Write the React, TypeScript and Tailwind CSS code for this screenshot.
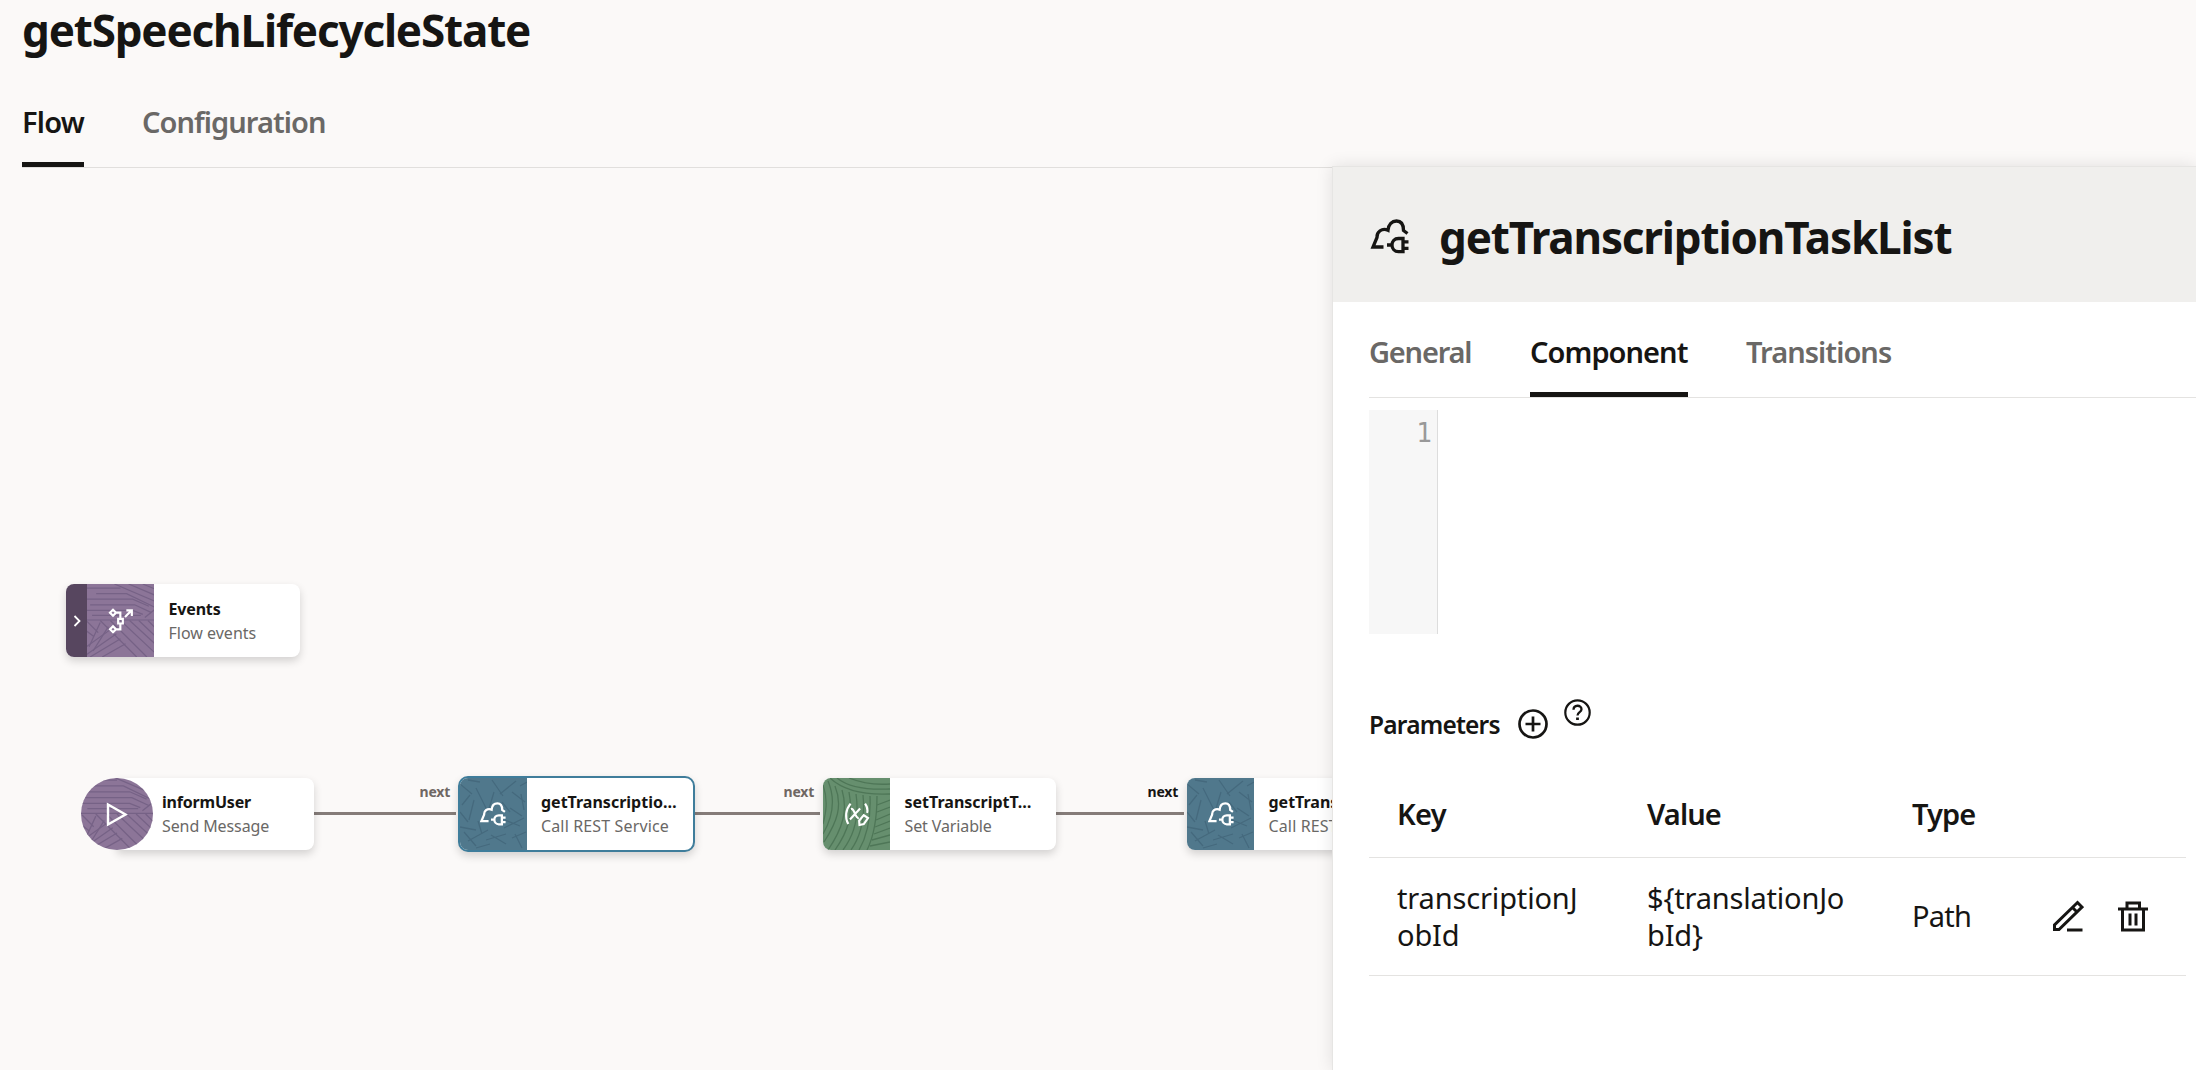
import type { ReactNode } from "react";

const FONT = "font-['Noto_Sans','Open_Sans',sans-serif]";

function CloudPlug({ className }: { className: string }) {
  return (
    <svg className={className} viewBox="11 6 38 36" fill="none" stroke="currentColor" strokeWidth="3.300">
      <path d="M23.500 34H13L17 24.500C16.500 19 22 14.500 28 17.200C28.500 11.500 32 8 36.500 8C41 8 43.500 11.500 43.500 17.500L47.500 20.500" strokeLinejoin="miter" />
      <path d="M43 25.500H38.500C34.500 25.500 32 28.500 32 32C32 35.500 34.500 38.700 38.500 38.700H43ZM27 32H32M43 28.800H48.500M43 35.400H48.500" />
    </svg>
  );
}

function FlowIcon() {
  return (
    <svg className="relative h-[28px] w-[26px]" viewBox="70 80 78 84" fill="none" stroke="white" strokeWidth="6.500">
      <path d="M85 88L94 97L85 106L76 97ZM85 138L94 147L85 156L76 147ZM100.500 115.500H114.500V129.500H100.500ZM94 97H107V115M107 130V147H94M121 110L141 90M125 90H141.500V107" />
    </svg>
  );
}

function VariableIcon() {
  return (
    <svg className="relative h-[27px] w-[27px]" viewBox="250 122 82 82" fill="none" stroke="white" strokeWidth="6.500">
      <path d="M273 130C258 148 255 172 266 192M317 130C324 140 326 148 323 158M274 146C286 142 286 176 298 174M302 145L271 178" />
      <path d="M299 182L313 165L326 174L313 192L300 195Z" />
    </svg>
  );
}

function PlayIcon() {
  return (
    <svg className="relative h-[25px] w-[22px]" viewBox="0 0 22 25" fill="none" stroke="white" strokeWidth="2.400">
      <path d="M2 2.500L19.500 12.500L2 22.500Z" />
    </svg>
  );
}

function PurplePattern() {
  return (
    <svg className="absolute inset-0 h-full w-full" viewBox="0 0 68 72" preserveAspectRatio="xMidYMid slice" fill="none" stroke="#6f5c80" strokeWidth="1.200" opacity="0.75">
      <path d="M0 4H34M10 9.500H40L68 23M0 15H46L62 22M4 20.500H48L64 28M0 26H46L56 30M6 31H54M0 35.500H68" />
      <path d="M28 0L68 17M42 0L68 11M56 0L68 5" />
      <path d="M68 25L58 33M1 37L12 48M0 46L8 52M3 62L14 38M7 66L22 42" />
      <path d="M14 36L50 72M24 36L60 72M34 36L68 68M43 36L68 59M52 36L68 51M61 36L68 43" />
      <path d="M4 72L34 54M0 70L30 49M16 72L39 59M0 62L24 45" />
    </svg>
  );
}

function BluePattern() {
  return (
    <svg className="absolute inset-0 h-full w-full" viewBox="0 0 67 72" preserveAspectRatio="none" fill="none" stroke="#426579" strokeWidth="1.3" opacity="0.75">
      <path d="M0 6L12 16M16 10L28 34M34 14L28 34M32 2L43 18M40 16L56 3M52 14L65 24M61 16L64 32M60 8L67 4M2 27L10 17M9 42L14 22M0 49L16 52M0 34L8 44M8 63L28 52M18 43L22 56M26 62L46 56M31 57L46 66M45 42L60 48M44 50L64 40M50 30L62 38M55 56L62 70M66 54L52 60M4 54L16 68M16 70L30 66M20 4L8 2M42 24L50 34" />
    </svg>
  );
}

function GreenPattern() {
  return (
    <svg className="absolute inset-0 h-full w-full" viewBox="0 0 67 72" preserveAspectRatio="none" fill="none" stroke="#4b7354" strokeWidth="1.300" opacity="0.85">
      <path d="M14 0C26 10 46 12 67 11M26 0C38 5 52 7 67 6M7 0C22 14 44 17 67 16" />
      <path d="M0 7C6 24 2 38 0 46M5 3C14 24 8 42 0 56M12 8C20 28 14 44 1 64M19 12C25 32 20 50 5 72M26 14C30 36 26 52 12 72M33 16C36 36 32 56 20 72M40 17C42 38 38 58 28 72M47 18C48 40 44 58 36 72M54 18C54 42 50 60 44 72" />
      <path d="M67 22L54 27M67 29L54 34M67 36L53 42M67 43L52 49M67 50L51 56M67 57L49 62M67 64L47 68" />
    </svg>
  );
}

type NodeProps = {
  title: string;
  kind: string;
  tile: string;
  pattern: ReactNode;
  icon: ReactNode;
  titleClass?: string;
  kindClass?: string;
};

function NodeBody({ title, kind, tile, pattern, icon, titleClass = "", kindClass = "" }: NodeProps) {
  return (
    <>
      <div className={`relative flex w-[67px] shrink-0 items-center justify-center overflow-hidden text-white ${tile}`}>
        {pattern}
        {icon}
      </div>
      <div className="flex flex-col justify-center whitespace-nowrap pl-[14.500px] text-[16px] leading-6">
        <div className={`font-bold text-[#161513] ${titleClass}`}>{title}</div>
        <div className={`text-[#6a6866] ${kindClass}`}>{kind}</div>
      </div>
    </>
  );
}

const cardShadow = "shadow-[0_4px_8px_rgba(0,0,0,0.16)]";

function Canvas() {
  return (
    <div className="relative min-w-0 flex-1 overflow-hidden">
      <div className={`absolute left-[66px] top-[416px] flex h-[73px] w-[234px] overflow-hidden rounded-lg bg-white ${cardShadow}`}>
        <div className="flex w-[21px] items-center justify-center bg-[#57465f]">
          <svg className="h-3 w-2" viewBox="0 0 8 12" fill="none" stroke="white" strokeWidth="1.800">
            <path d="M1.500 1L6.500 6L1.500 11" />
          </svg>
        </div>
        <NodeBody title="Events" kind="Flow events" tile="bg-[#8c7698]" pattern={<PurplePattern />} icon={<FlowIcon />} titleClass="tracking-[-0.17px]" />
      </div>

      <div className="absolute left-[313px] top-[644px] h-[3px] w-[143px] bg-[#857c79]" />
      <div className="absolute left-[694px] top-[644px] h-[3px] w-[126px] bg-[#857c79]" />
      <div className="absolute left-[1056px] top-[644px] h-[3px] w-[128px] bg-[#857c79]" />
      <div className="absolute left-[419.500px] top-[614px] text-[14px] font-bold leading-5 tracking-[-0.2px] text-[#6f6763]">next</div>
      <div className="absolute left-[783.500px] top-[614px] text-[14px] font-bold leading-5 tracking-[-0.2px] text-[#6f6763]">next</div>
      <div className="absolute left-[1147.500px] top-[614px] text-[14px] font-bold leading-5 tracking-[-0.2px] text-[#161513]">next</div>

      <div className={`absolute left-[117px] top-[610px] h-[72px] w-[196.500px] rounded-r-lg bg-white ${cardShadow}`} />
      <div className="absolute left-[80.500px] top-[610px] flex h-[72px]">
        <div className="relative flex w-[72px] items-center justify-center overflow-hidden rounded-full bg-[#8c7698]">
          <PurplePattern />
          <PlayIcon />
        </div>
        <div className="flex flex-col justify-center pl-[9.500px] text-[16px] leading-6">
          <div className="font-bold tracking-[-0.2px] text-[#161513]">informUser</div>
          <div className="tracking-[-0.1px] text-[#6a6866]">Send Message</div>
        </div>
      </div>

      <div className={`absolute left-[457.500px] top-[608px] flex h-[76px] w-[237px] overflow-hidden rounded-[10px] border-2 border-[#3f7d9b] bg-white ${cardShadow}`}>
        <NodeBody title="getTranscriptio…" kind="Call REST Service" tile="bg-[#50798d]" pattern={<BluePattern />} icon={<CloudPlug className="relative h-[24.500px] w-[26px]" />} kindClass="tracking-[0.14px]" />
      </div>

      <div className={`absolute left-[823px] top-[610px] flex h-[72px] w-[233px] overflow-hidden rounded-lg bg-white ${cardShadow}`}>
        <NodeBody title="setTranscriptT…" kind="Set Variable" tile="bg-[#67906f]" pattern={<GreenPattern />} icon={<VariableIcon />} kindClass="tracking-[-0.12px]" />
      </div>

      <div className={`absolute left-[1187px] top-[610px] flex h-[72px] w-[233px] overflow-hidden rounded-lg bg-white ${cardShadow}`}>
        <NodeBody title="getTranscriptio…" kind="Call REST Service" tile="bg-[#50798d]" pattern={<BluePattern />} icon={<CloudPlug className="relative h-[24.500px] w-[26px]" />} kindClass="tracking-[0.14px]" />
      </div>
    </div>
  );
}

function Tab({ label, active, className }: { label: string; active?: boolean; className: string }) {
  return (
    <button
      className={`box-border h-[91px] whitespace-nowrap text-left text-[29px] font-semibold leading-[91px] ${
        active ? "text-[#161513] shadow-[inset_0_-5px_0_#161513]" : "text-[#6a6866]"
      } ${className}`}
    >
      {label}
    </button>
  );
}

function Panel() {
  return (
    <aside className="relative z-10 -mt-[2px] flex w-[864px] shrink-0 flex-col border-l border-t border-[#e6e5e3] bg-white shadow-[0_0_16px_rgba(0,0,0,0.11)]">
      <header className="flex h-[135px] shrink-0 items-center bg-[#f0efed] pl-[36.500px] pt-[4px]">
        <CloudPlug className="h-[36px] w-[40px]" />
        <h2 className="ml-[29.500px] text-[44px] font-bold leading-[58px] tracking-[-1.17px]">getTranscriptionTaskList</h2>
      </header>
      <div className="flex flex-col pl-9">
        <nav className="mt-1 flex border-b border-[#e4e3e1]">
          <Tab label="General" className="w-[161px] tracking-[-1.2px]" />
          <Tab label="Component" active className="w-[158px] tracking-[-0.95px]" />
          <Tab label="Transitions" className="ml-[58px] tracking-[-0.95px]" />
        </nav>
        <div className="mt-3 flex h-[224px]">
          <div className="w-[69px] border-r border-[#dddddd] bg-[#f7f7f7] pr-[5px] pt-[5px] text-right font-['DejaVu_Sans_Mono',monospace] text-[26px] leading-9 text-[#999999]">1</div>
        </div>
        <div className="mt-11 flex h-[92px] items-center">
          <span className="relative top-px text-[24.500px] font-semibold tracking-[-0.8px]">Parameters</span>
          <svg className="ml-[18px] h-[30px] w-[30px]" viewBox="0 0 30 30" fill="none" stroke="currentColor" strokeWidth="2.700">
            <circle cx="15" cy="15" r="13.500" />
            <path d="M15 7.500V22.500M7.500 15H22.500" />
          </svg>
          <svg className="-mt-6 ml-[16.500px] h-[27px] w-[27px]" viewBox="0 0 27 27" fill="none" stroke="currentColor" strokeWidth="2.200">
            <circle cx="13.500" cy="13.500" r="12.200" />
            <path d="M9.500 10.800C9.500 5.500 17.500 5.500 17.500 10.300C17.500 13.300 13.500 13 13.500 16.500" strokeWidth="2.300" />
            <path d="M13.500 18.500V21" strokeWidth="2.800" />
          </svg>
        </div>
        <div className="grid w-[816.500px] grid-cols-[250px_265px_138px_1fr] text-[29px] leading-[37px]">
          <div className="col-span-4 grid h-[88px] grid-cols-subgrid items-center border-b border-[#e4e3e1] font-semibold">
            <div className="pl-[28px] tracking-[-0.7px]">Key</div>
            <div className="pl-[28px] tracking-[-0.9px]">Value</div>
            <div className="pl-[28px] tracking-[-0.9px]">Type</div>
          </div>
          <div className="col-span-4 grid h-[118px] grid-cols-subgrid items-center border-b border-[#e4e3e1] pb-[2px]">
            <div className="pl-[28px] tracking-[-0.15px]">transcriptionJ<br />obId</div>
            <div className="pl-[28px] tracking-[-0.2px]">{"${translationJo"}<br />{"bId}"}</div>
            <div className="pl-[28px] tracking-[-0.8px]">Path</div>
            <div className="flex items-center pl-[29.500px]">
              <svg className="h-8 w-8" viewBox="0 0 32 32" fill="none" stroke="currentColor" strokeWidth="3">
                <path d="M2.500 29.500V25L25.500 2.500L30 7L7 29.500ZM20.500 7.500L25 12M15 30.100H30.500" />
              </svg>
              <svg className="ml-[34px] h-8 w-[30px]" viewBox="0 0 30 32" fill="none" stroke="currentColor" strokeWidth="3">
                <path d="M0 8.900H30M9 8V2.900H21.500V8M4.500 9V30H25.500V9" />
                <path d="M12 13.500V25.500M18 13.500V25.500" />
              </svg>
            </div>
          </div>
        </div>
      </div>
    </aside>
  );
}

export default function App() {
  return (
    <div className={`flex h-[1070px] w-[2196px] flex-col overflow-hidden bg-[#fbf9f8] text-[#161513] ${FONT}`}>
      <div className="ml-[22px] border-b border-[#e1dfdd]">
        <h1 className="h-[58px] text-[44px] font-bold leading-[60px] tracking-[-1.17px]">getSpeechLifecycleState</h1>
        <nav className="mt-[18px] flex">
          <Tab label="Flow" active className="w-[62px] tracking-[-0.8px]" />
          <Tab label="Configuration" className="ml-[58px] tracking-[-0.95px]" />
        </nav>
      </div>
      <main className="flex min-h-0 flex-1">
        <Canvas />
        <Panel />
      </main>
    </div>
  );
}
